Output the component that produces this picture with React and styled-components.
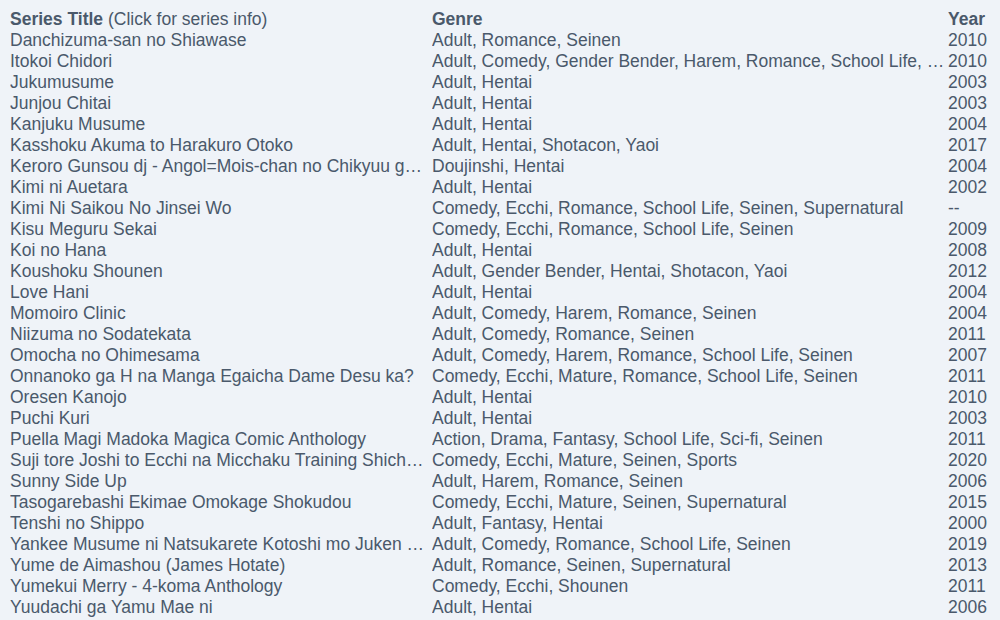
import React from "react";
import styled, { createGlobalStyle } from "styled-components";

const series = [
  ["Danchizuma-san no Shiawase", "Adult, Romance, Seinen", "2010"],
  ["Itokoi Chidori", "Adult, Comedy, Gender Bender, Harem, Romance, School Life, Seinen", "2010"],
  ["Jukumusume", "Adult, Hentai", "2003"],
  ["Junjou Chitai", "Adult, Hentai", "2003"],
  ["Kanjuku Musume", "Adult, Hentai", "2004"],
  ["Kasshoku Akuma to Harakuro Otoko", "Adult, Hentai, Shotacon, Yaoi", "2017"],
  ["Keroro Gunsou dj - Angol=Mois-chan no Chikyuu ga Daisuki", "Doujinshi, Hentai", "2004"],
  ["Kimi ni Auetara", "Adult, Hentai", "2002"],
  ["Kimi Ni Saikou No Jinsei Wo", "Comedy, Ecchi, Romance, School Life, Seinen, Supernatural", "--"],
  ["Kisu Meguru Sekai", "Comedy, Ecchi, Romance, School Life, Seinen", "2009"],
  ["Koi no Hana", "Adult, Hentai", "2008"],
  ["Koushoku Shounen", "Adult, Gender Bender, Hentai, Shotacon, Yaoi", "2012"],
  ["Love Hani", "Adult, Hentai", "2004"],
  ["Momoiro Clinic", "Adult, Comedy, Harem, Romance, Seinen", "2004"],
  ["Niizuma no Sodatekata", "Adult, Comedy, Romance, Seinen", "2011"],
  ["Omocha no Ohimesama", "Adult, Comedy, Harem, Romance, School Life, Seinen", "2007"],
  ["Onnanoko ga H na Manga Egaicha Dame Desu ka?", "Comedy, Ecchi, Mature, Romance, School Life, Seinen", "2011"],
  ["Oresen Kanojo", "Adult, Hentai", "2010"],
  ["Puchi Kuri", "Adult, Hentai", "2003"],
  ["Puella Magi Madoka Magica Comic Anthology", "Action, Drama, Fantasy, School Life, Sci-fi, Seinen", "2011"],
  ["Suji tore Joshi to Ecchi na Micchaku Training Shichaimashita", "Comedy, Ecchi, Mature, Seinen, Sports", "2020"],
  ["Sunny Side Up", "Adult, Harem, Romance, Seinen", "2006"],
  ["Tasogarebashi Ekimae Omokage Shokudou", "Comedy, Ecchi, Mature, Seinen, Supernatural", "2015"],
  ["Tenshi no Shippo", "Adult, Fantasy, Hentai", "2000"],
  ["Yankee Musume ni Natsukarete Kotoshi mo Juken ni Shippai Shisou Desu", "Adult, Comedy, Romance, School Life, Seinen", "2019"],
  ["Yume de Aimashou (James Hotate)", "Adult, Romance, Seinen, Supernatural", "2013"],
  ["Yumekui Merry - 4-koma Anthology", "Comedy, Ecchi, Shounen", "2011"],
  ["Yuudachi ga Yamu Mae ni", "Adult, Hentai", "2006"],
];

const GlobalStyle = createGlobalStyle`
  body {
    margin: 0;
    background: #eff3f8;
    font-family: "Liberation Sans", Arial, sans-serif;
  }
`;

const Table = styled.div`
  padding: 9px 10px 0 10px;
  color: #4a596b;
  font-size: 17.5px;
  line-height: 21px;
`;

const Row = styled.div`
  display: grid;
  grid-template-columns: 422px 516px 1fr;
  font-weight: ${(p) => (p.$head ? "bold" : "normal")};
`;

const Cell = styled.div`
  white-space: nowrap;
  overflow: hidden;
  text-overflow: ellipsis;
  padding-right: ${(p) => p.$pad || 0}px;
`;

const Hint = styled.span`
  font-weight: normal;
`;

export default function App() {
  return (
    <>
      <GlobalStyle />
      <Table>
        <Row $head>
          <Cell $pad={5}>
            Series Title <Hint>(Click for series info)</Hint>
          </Cell>
          <Cell $pad={2}>Genre</Cell>
          <Cell>Year</Cell>
        </Row>
        {series.map(([title, genre, year]) => (
          <Row key={title}>
            <Cell $pad={5}>{title}</Cell>
            <Cell $pad={2}>{genre}</Cell>
            <Cell>{year}</Cell>
          </Row>
        ))}
      </Table>
    </>
  );
}
